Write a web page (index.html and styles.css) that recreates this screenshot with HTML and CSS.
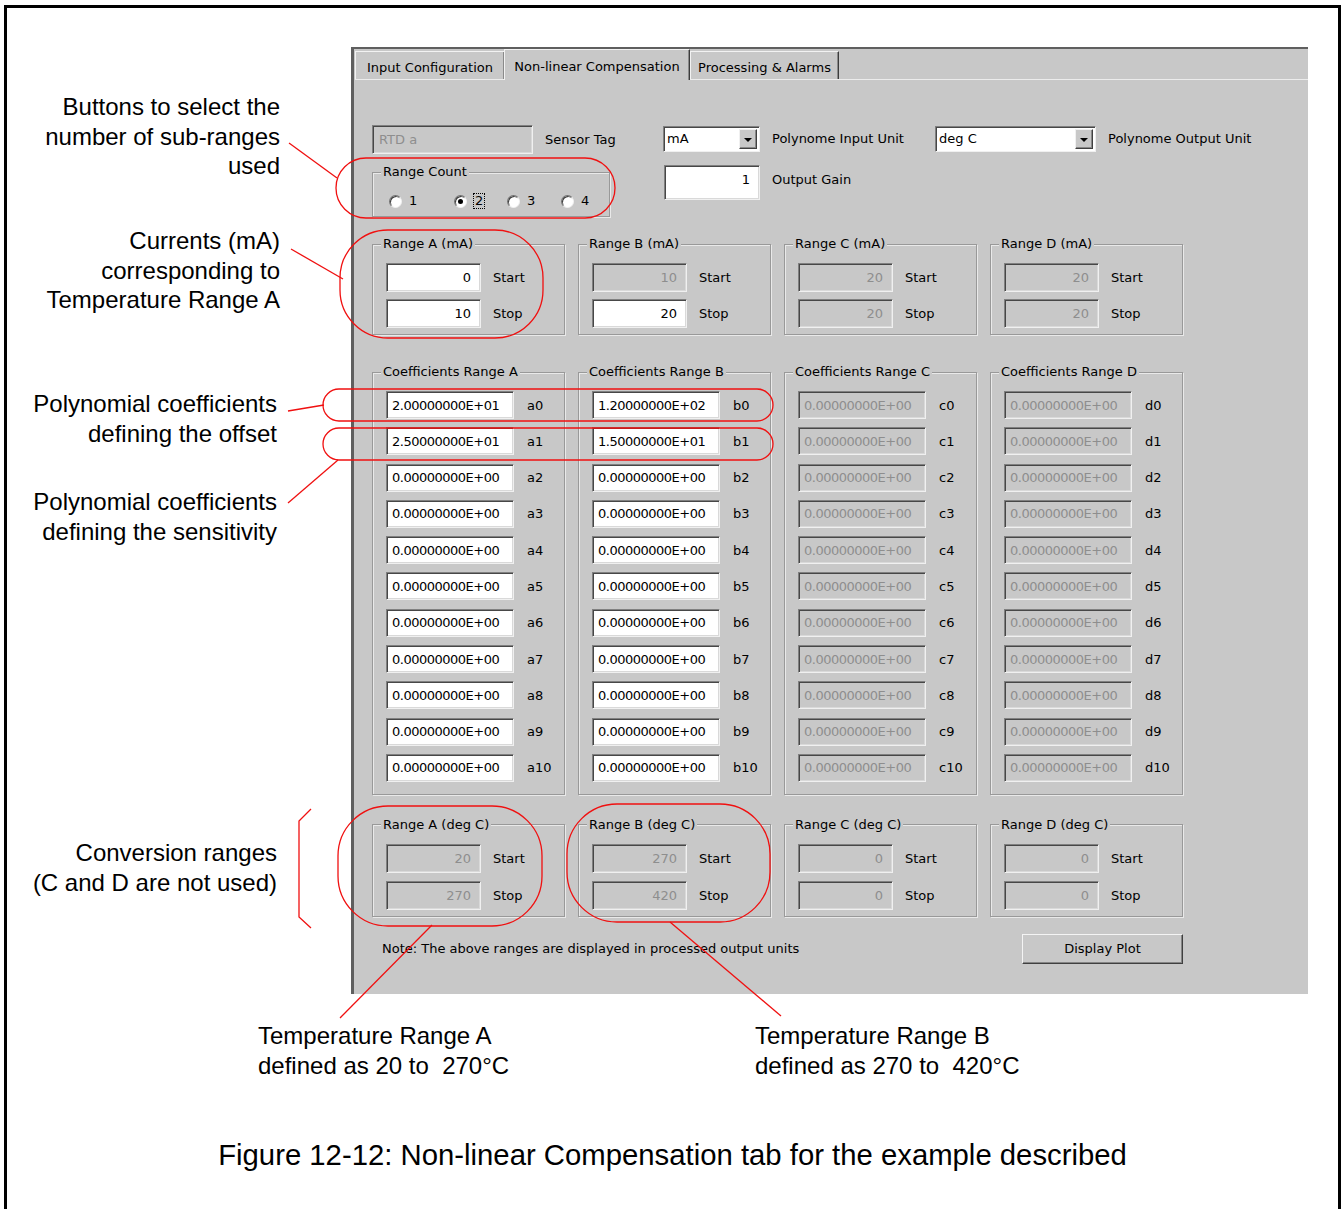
FILE: index.html
```html
<!DOCTYPE html>
<html lang="en">
<head>
  <meta charset="UTF-8">
  <title>Non-linear Compensation</title>
  <link rel="stylesheet" href="styles.css">
</head>
<body>
<div class="page">
  <div class="figure">

    <div class="callouts">
      <p class="callout c-count">Buttons to select the<br>number of sub-ranges<br>used</p>
      <p class="callout c-current">Currents (mA)<br>corresponding to<br>Temperature Range A</p>
      <p class="callout c-offset">Polynomial coefficients<br>defining the offset</p>
      <p class="callout c-sens">Polynomial coefficients<br>defining the sensitivity</p>
      <p class="callout c-conv">Conversion ranges<br>(C and D are not used)</p>
    </div>

    <div class="window">
      <div class="tabs">
        <div class="tab t1">Input Configuration</div>
        <div class="tab t2 active">Non-linear Compensation</div>
        <div class="tab t3">Processing &amp; Alarms</div>
      </div>

      <div class="pane">
        <div class="top-grid">
          <div class="field">
            <div class="edit off sensor">RTD a</div>
            <span>Sensor Tag</span>
          </div>
          <div class="field">
            <div class="combo unit-in"><span>mA</span><i class="drop"></i></div>
            <span>Polynome Input Unit</span>
          </div>
          <div class="field">
            <div class="combo unit-out"><span>deg C</span><i class="drop"></i></div>
            <span>Polynome Output Unit</span>
          </div>

          <fieldset class="group count">
            <legend>Range Count</legend>
            <div class="group-body radios">
              <div class="radio r1"><i></i><span>1</span></div>
              <div class="radio r2 on"><i></i><span class="focus">2</span></div>
              <div class="radio r3"><i></i><span>3</span></div>
              <div class="radio r4"><i></i><span>4</span></div>
            </div>
          </fieldset>
          <div class="field gain-field">
            <div class="edit num gain">1</div>
            <span>Output Gain</span>
          </div>
        </div>

        <!-- current ranges -->
        <div class="groups ranges-ma">
          <fieldset class="group">
            <legend>Range A (mA)</legend>
            <div class="group-body pair">
              <div class="row"><div class="edit num">0</div><span>Start</span></div>
              <div class="row"><div class="edit num">10</div><span>Stop</span></div>
            </div>
          </fieldset>
          <fieldset class="group">
            <legend>Range B (mA)</legend>
            <div class="group-body pair">
              <div class="row"><div class="edit num off">10</div><span>Start</span></div>
              <div class="row"><div class="edit num">20</div><span>Stop</span></div>
            </div>
          </fieldset>
          <fieldset class="group">
            <legend>Range C (mA)</legend>
            <div class="group-body pair">
              <div class="row"><div class="edit num off">20</div><span>Start</span></div>
              <div class="row"><div class="edit num off">20</div><span>Stop</span></div>
            </div>
          </fieldset>
          <fieldset class="group">
            <legend>Range D (mA)</legend>
            <div class="group-body pair">
              <div class="row"><div class="edit num off">20</div><span>Start</span></div>
              <div class="row"><div class="edit num off">20</div><span>Stop</span></div>
            </div>
          </fieldset>
        </div>

        <!-- polynomial coefficients -->
        <div class="groups coefs">
          <fieldset class="group">
            <legend>Coefficients Range A</legend>
            <div class="group-body list">
              <div class="row"><div class="edit coef">2.00000000E+01</div><span>a0</span></div>
              <div class="row"><div class="edit coef">2.50000000E+01</div><span>a1</span></div>
              <div class="row"><div class="edit coef">0.00000000E+00</div><span>a2</span></div>
              <div class="row"><div class="edit coef">0.00000000E+00</div><span>a3</span></div>
              <div class="row"><div class="edit coef">0.00000000E+00</div><span>a4</span></div>
              <div class="row"><div class="edit coef">0.00000000E+00</div><span>a5</span></div>
              <div class="row"><div class="edit coef">0.00000000E+00</div><span>a6</span></div>
              <div class="row"><div class="edit coef">0.00000000E+00</div><span>a7</span></div>
              <div class="row"><div class="edit coef">0.00000000E+00</div><span>a8</span></div>
              <div class="row"><div class="edit coef">0.00000000E+00</div><span>a9</span></div>
              <div class="row"><div class="edit coef">0.00000000E+00</div><span>a10</span></div>
            </div>
          </fieldset>
          <fieldset class="group">
            <legend>Coefficients Range B</legend>
            <div class="group-body list">
              <div class="row"><div class="edit coef">1.20000000E+02</div><span>b0</span></div>
              <div class="row"><div class="edit coef">1.50000000E+01</div><span>b1</span></div>
              <div class="row"><div class="edit coef">0.00000000E+00</div><span>b2</span></div>
              <div class="row"><div class="edit coef">0.00000000E+00</div><span>b3</span></div>
              <div class="row"><div class="edit coef">0.00000000E+00</div><span>b4</span></div>
              <div class="row"><div class="edit coef">0.00000000E+00</div><span>b5</span></div>
              <div class="row"><div class="edit coef">0.00000000E+00</div><span>b6</span></div>
              <div class="row"><div class="edit coef">0.00000000E+00</div><span>b7</span></div>
              <div class="row"><div class="edit coef">0.00000000E+00</div><span>b8</span></div>
              <div class="row"><div class="edit coef">0.00000000E+00</div><span>b9</span></div>
              <div class="row"><div class="edit coef">0.00000000E+00</div><span>b10</span></div>
            </div>
          </fieldset>
          <fieldset class="group">
            <legend>Coefficients Range C</legend>
            <div class="group-body list">
              <div class="row"><div class="edit coef off">0.00000000E+00</div><span>c0</span></div>
              <div class="row"><div class="edit coef off">0.00000000E+00</div><span>c1</span></div>
              <div class="row"><div class="edit coef off">0.00000000E+00</div><span>c2</span></div>
              <div class="row"><div class="edit coef off">0.00000000E+00</div><span>c3</span></div>
              <div class="row"><div class="edit coef off">0.00000000E+00</div><span>c4</span></div>
              <div class="row"><div class="edit coef off">0.00000000E+00</div><span>c5</span></div>
              <div class="row"><div class="edit coef off">0.00000000E+00</div><span>c6</span></div>
              <div class="row"><div class="edit coef off">0.00000000E+00</div><span>c7</span></div>
              <div class="row"><div class="edit coef off">0.00000000E+00</div><span>c8</span></div>
              <div class="row"><div class="edit coef off">0.00000000E+00</div><span>c9</span></div>
              <div class="row"><div class="edit coef off">0.00000000E+00</div><span>c10</span></div>
            </div>
          </fieldset>
          <fieldset class="group">
            <legend>Coefficients Range D</legend>
            <div class="group-body list">
              <div class="row"><div class="edit coef off">0.00000000E+00</div><span>d0</span></div>
              <div class="row"><div class="edit coef off">0.00000000E+00</div><span>d1</span></div>
              <div class="row"><div class="edit coef off">0.00000000E+00</div><span>d2</span></div>
              <div class="row"><div class="edit coef off">0.00000000E+00</div><span>d3</span></div>
              <div class="row"><div class="edit coef off">0.00000000E+00</div><span>d4</span></div>
              <div class="row"><div class="edit coef off">0.00000000E+00</div><span>d5</span></div>
              <div class="row"><div class="edit coef off">0.00000000E+00</div><span>d6</span></div>
              <div class="row"><div class="edit coef off">0.00000000E+00</div><span>d7</span></div>
              <div class="row"><div class="edit coef off">0.00000000E+00</div><span>d8</span></div>
              <div class="row"><div class="edit coef off">0.00000000E+00</div><span>d9</span></div>
              <div class="row"><div class="edit coef off">0.00000000E+00</div><span>d10</span></div>
            </div>
          </fieldset>
        </div>

        <!-- temperature ranges -->
        <div class="groups ranges-deg">
          <fieldset class="group">
            <legend>Range A (deg C)</legend>
            <div class="group-body pair">
              <div class="row"><div class="edit num off">20</div><span>Start</span></div>
              <div class="row"><div class="edit num off">270</div><span>Stop</span></div>
            </div>
          </fieldset>
          <fieldset class="group">
            <legend>Range B (deg C)</legend>
            <div class="group-body pair">
              <div class="row"><div class="edit num off">270</div><span>Start</span></div>
              <div class="row"><div class="edit num off">420</div><span>Stop</span></div>
            </div>
          </fieldset>
          <fieldset class="group">
            <legend>Range C (deg C)</legend>
            <div class="group-body pair">
              <div class="row"><div class="edit num off">0</div><span>Start</span></div>
              <div class="row"><div class="edit num off">0</div><span>Stop</span></div>
            </div>
          </fieldset>
          <fieldset class="group">
            <legend>Range D (deg C)</legend>
            <div class="group-body pair">
              <div class="row"><div class="edit num off">0</div><span>Start</span></div>
              <div class="row"><div class="edit num off">0</div><span>Stop</span></div>
            </div>
          </fieldset>
        </div>

        <div class="footer">
          <span class="note">Note: The above ranges are displayed in processed output units</span>
          <button class="btn">Display Plot</button>
        </div>
      </div>
    </div>

    <div class="notes">
      <p class="note-a">Temperature Range A<br>defined as 20 to&nbsp; 270°C</p>
      <p class="note-b">Temperature Range B<br>defined as 270 to&nbsp; 420°C</p>
    </div>

    <p class="caption">Figure 12-12: Non-linear Compensation tab for the example described</p>
  </div>

  <!-- red annotation marks -->
  <svg class="marks" width="1343" height="1209" viewBox="0 0 1343 1209" fill="none" stroke="#f01010" stroke-width="1.3">
    <rect x="336" y="158" width="279" height="60" rx="30"/>
    <line x1="289" y1="143" x2="337" y2="178"/>
    <rect x="340" y="230" width="203" height="108" rx="48"/>
    <line x1="291" y1="249" x2="343" y2="279"/>
    <rect x="323" y="389" width="450" height="32" rx="16"/>
    <line x1="288" y1="411" x2="324" y2="405"/>
    <rect x="323" y="428" width="450" height="32" rx="16"/>
    <line x1="288" y1="503" x2="338" y2="460"/>
    <polyline points="311,809 299,821 299,917 311,928"/>
    <rect x="338" y="806" width="204" height="120" rx="50"/>
    <rect x="567" y="804" width="203" height="118" rx="50"/>
    <line x1="432" y1="925" x2="340" y2="1018"/>
    <line x1="670" y1="922" x2="781" y2="1016"/>
  </svg>
</div>
</body>
</html>
```

FILE: styles.css
```css
body {
  margin: 0;
  background: #fff;
  overflow: hidden;
  font-family: "Liberation Sans", Arial, sans-serif;
}
.page {
  position: relative;
  width: 1343px;
  height: 1209px;
  overflow: hidden;
}
.figure {
  box-sizing: border-box;
  margin: 5px 0 0 4px;
  width: 1337px;
  height: 1230px;
  border: 3px solid #000;
  padding-top: 39px;
  display: grid;
  grid-template-columns: 273px 1fr;
  column-gap: 71px;
  align-content: start;
}

/* left side callouts */
.callouts {
  font-size: 24px;
  line-height: 29.5px;
  text-align: right;
}
.callout {
  margin: 0;
}
.c-count { margin-top: 45px; }
.c-current { margin-top: 45.5px; }
.c-offset { margin-top: 74.5px; padding-right: 3px; }
.c-sens { margin-top: 39px; padding-right: 3px; }
.c-conv { margin-top: 292px; padding-right: 3px; }

.notes {
  grid-column: 1 / -1;
  display: flex;
  margin-top: 27px;
  padding-left: 251px;
  font-size: 24px;
  line-height: 30px;
}
.notes p {
  margin: 0;
}
.note-a {
  width: 497px;
}
.caption {
  grid-column: 1 / -1;
  margin: 57px 0 0;
  text-align: center;
  font-size: 29.3px;
  line-height: 34px;
}

/* the dialog */
.window {
  box-sizing: border-box;
  width: 957px;
  height: 947px;
  border-top: 2px solid #5f5f5f;
  border-left: 3px solid #5f5f5f;
  background: #c8c8c8;
  font-family: "DejaVu Sans", Verdana, sans-serif;
  font-size: 13px;
  color: #000;
}
.tabs {
  display: flex;
  align-items: flex-end;
  height: 30px;
  margin-left: 1px;
}
.tab {
  box-sizing: border-box;
  height: 28px;
  padding-top: 2px;
  line-height: 27px;
  text-align: center;
  border-top: 1px solid #f2f2f2;
  border-left: 1px solid #f2f2f2;
  border-right: 1px solid #3c3c3c;
  box-shadow: inset -1px 0 #8a8a8a;
}
.t1 { width: 150px; }
.t2 { width: 186px; }
.t3 { width: 149px; }
.tab.active {
  position: relative;
  height: 31px;
  margin-bottom: -1px;
  padding-top: 3px;
  line-height: 28px;
  background: #c8c8c8;
  margin-left: -1px;
}
.pane {
  border-top: 1px solid #ececec;
  margin-left: 1px;
  padding: 45px 0 0 17px;
}

.top-grid {
  display: grid;
  grid-template-columns: 291px 272px auto;
  row-gap: 11px;
  align-items: start;
}
.field {
  display: flex;
  align-items: center;
  gap: 12px;
}
.gain-field {
  margin-left: 1px;
  align-items: flex-start;
}
.gain-field span {
  margin-top: 7px;
}

/* edit boxes */
.edit {
  box-sizing: border-box;
  height: 29px;
  border: 1px solid;
  border-color: #808080 #f0f0f0 #f0f0f0 #808080;
  box-shadow: inset 1px 1px #474747, inset -1px -1px #d9d9d9;
  background: #fff;
  display: flex;
  align-items: center;
  padding: 0 9px 0 6px;
  white-space: nowrap;
}
.edit.num {
  justify-content: flex-end;
  width: 95px;
}
.edit.off {
  background: #c8c8c8;
  color: #8e8e8e;
}
.sensor {
  width: 161px;
}
.edit.gain {
  height: 35px;
  width: 96px;
  align-items: flex-start;
  padding-top: 6px;
}
.edit.coef {
  width: 128px;
  height: 28px;
  padding-left: 5px;
  letter-spacing: -0.5px;
}

.combo {
  box-sizing: border-box;
  display: flex;
  height: 26px;
  margin-top: 1px;
  border: 1px solid;
  border-color: #808080 #f0f0f0 #f0f0f0 #808080;
  box-shadow: inset 1px 1px #474747;
  background: #fff;
  padding: 2px;
}
.combo span {
  flex: 1;
  line-height: 20px;
  padding-left: 1px;
}
.unit-in { width: 97px; }
.unit-out { width: 161px; }
.drop {
  position: relative;
  width: 18px;
  box-sizing: border-box;
  background: #c8c8c8;
  border: 1px solid;
  border-color: #f0f0f0 #404040 #404040 #f0f0f0;
  box-shadow: inset -1px -1px #888;
}
.drop::after {
  content: "";
  position: absolute;
  left: 4px;
  top: 8px;
  border-left: 4px solid transparent;
  border-right: 4px solid transparent;
  border-top: 4px solid #000;
}

/* group boxes */
.group {
  margin: 0;
  padding: 0;
  min-width: 0;
  border: 1px solid #999;
  box-shadow: 1px 1px 0 #e9e9e9, inset 1px 1px 0 #e9e9e9;
}
.group legend {
  margin-left: 8px;
  padding: 0 2px;
  line-height: 14px;
  background: #c8c8c8;
}
.group-body {
  padding: 12px 0 6px 13px;
}
.count {
  width: 238px;
  box-sizing: border-box;
}
.radios {
  display: flex;
  align-items: center;
  padding: 15px 0 8px 16px;
  height: 14px;
}
.radio {
  display: flex;
  align-items: center;
}
.r1 { width: 65px; }
.r2 { width: 53px; }
.r3 { width: 54px; }
.radio i {
  position: relative;
  box-sizing: border-box;
  width: 13px;
  height: 13px;
  border-radius: 50%;
  background: #fff;
  border: 1px solid;
  border-color: #707070 #f0f0f0 #f0f0f0 #707070;
  box-shadow: inset 1px 1px #3c3c3c;
}
.radio.on i::after {
  content: "";
  position: absolute;
  left: 3px;
  top: 3px;
  width: 5px;
  height: 5px;
  border-radius: 50%;
  background: #000;
}
.radio span {
  margin-left: 7px;
  line-height: 14px;
}
.radio .focus {
  outline: 1px dotted #000;
  outline-offset: 0;
  padding: 0 1px;
}

.groups {
  display: grid;
  grid-template-columns: repeat(4, 193px);
  column-gap: 13px;
}
.ranges-ma { margin-top: 20px; }
.coefs { margin-top: 30px; }
.ranges-deg { margin-top: 23px; }

.row {
  display: flex;
  align-items: center;
  gap: 12px;
}
.pair {
  display: flex;
  flex-direction: column;
  gap: 7px;
}
.ranges-deg .pair {
  gap: 8px;
}
.list {
  display: flex;
  flex-direction: column;
  gap: 8.3px;
  padding-bottom: 12px;
}
.list .row {
  gap: 13px;
}

.footer {
  width: 811px;
  margin-top: 17px;
  display: flex;
  align-items: center;
  justify-content: space-between;
}
.note {
  margin-left: 10px;
}
.btn {
  box-sizing: border-box;
  width: 161px;
  height: 30px;
  border: 1px solid;
  border-color: #f4f4f4 #404040 #404040 #f4f4f4;
  box-shadow: inset -1px -1px #858585;
  background: #c8c8c8;
  font: inherit;
  color: #000;
  padding: 0;
}

.marks {
  position: absolute;
  left: 0;
  top: 0;
}
```
